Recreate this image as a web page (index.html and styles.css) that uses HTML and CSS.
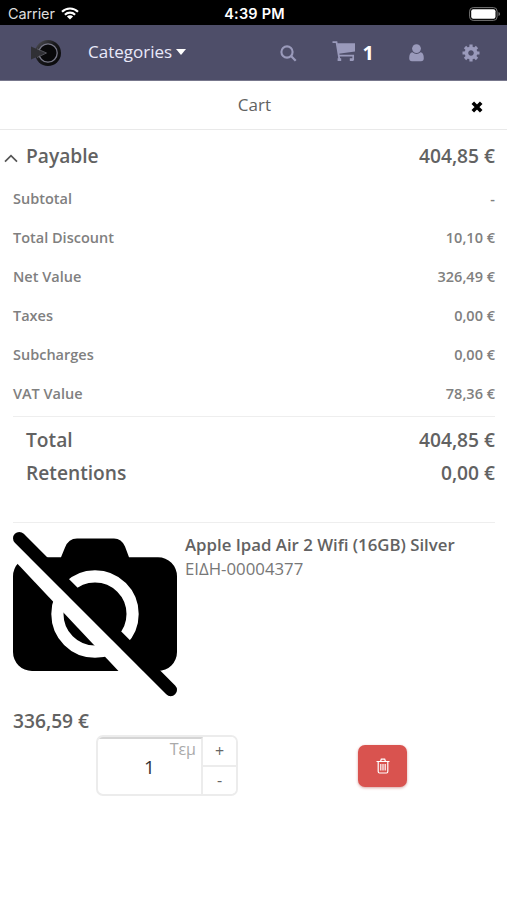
FILE: index.html
```html
<!DOCTYPE html>
<html lang="en">
    <head>
        <meta charset="UTF-8" />
        <meta name="viewport" content="width=device-width, initial-scale=1.0" />
        <title>Cart</title>
        <link rel="stylesheet" href="styles.css">
    </head>
    <body>
        <div class="status">
            <div class="carrier">
                <span>Carrier</span>
                <svg class="wifi" width="18" height="13" viewBox="0 0 18 13">
                    <path d="M1 4.8a11.4 11.4 0 0 1 16 0M3.9 7.7a7.3 7.3 0 0 1 10.2 0" fill="none" stroke="#fff" stroke-width="2.1" />
                    <path d="M9 12.6L5.9 9.6a4.4 4.4 0 0 1 6.2 0z" fill="#fff" />
                </svg>
            </div>
            <div class="time">4:39 PM</div>
            <svg class="battery" width="32" height="14" viewBox="0 0 32 14">
                <rect x=".6" y=".6" width="27.5" height="12.8" rx="3.6" fill="none" stroke="#777" />
                <rect x="2.2" y="2.2" width="24.3" height="9.6" rx="2" fill="#fff" />
                <path d="M29.5 5v4q1.6-.6 1.6-2t-1.6-2" fill="#777" />
            </svg>
        </div>
        <header class="navbar">
            <svg class="logo" width="32" height="28" viewBox="0 0 32 28">
                <defs>
                    <linearGradient id="metal" x1="0" y1="0" x2="1" y2="1">
                        <stop offset="0" stop-color="#55555c" />
                        <stop offset=".45" stop-color="#18181b" />
                        <stop offset="1" stop-color="#050506" />
                    </linearGradient>
                </defs>
                <circle cx="18" cy="14" r="13" fill="url(#metal)" />
                <circle cx="18" cy="14" r="9.2" fill="#08080a" stroke="#777787" stroke-width="1.3" />
                <path d="M1 7.500L16 14L1 20.500z" fill="#303035" />
                <path d="M7 9.800l9.500 4.200-9.500 4.500" fill="none" stroke="#66666f" stroke-width=".8" />
            </svg>
            <a class="categories">Categories<i class="caret"></i></a>
            <nav class="tools">
                <svg class="search" width="17" height="17" viewBox="0 0 17 17">
                    <circle cx="7" cy="7" r="5.6" fill="none" stroke="#9a9abb" stroke-width="2.1" />
                    <path d="M11 11l4.7 4.7" stroke="#9a9abb" stroke-width="2.3" />
                </svg>
                <div class="basket">
                    <svg width="24" height="21" viewBox="0 0 24 21">
                        <path d="M.5 1.2h4l3 18" fill="none" stroke="#9a9abb" stroke-width="1.8" />
                        <path d="M5 2.3h18v8.2L6.6 12.8z" fill="#9a9abb" />
                        <path d="M7 14.7h14.2v4.6" fill="none" stroke="#9a9abb" stroke-width="1.7" />
                        <path d="M5.6 17.3h3.6v2.8H5.6zM17.8 17.3h3.6v2.8h-3.6z" fill="#9a9abb" />
                    </svg>
                    <b>1</b>
                </div>
                <svg class="user" width="15" height="18" viewBox="0 0 15 18">
                    <circle cx="7.5" cy="4.6" r="4.4" fill="#9a9abb" />
                    <path d="M3.4 8.2Q7.5 11.6 11.6 8.2Q14.8 8.8 14.8 14.2Q14.8 17.2 12 17.2H3Q.2 17.2 .2 14.2Q.2 8.8 3.4 8.2z" fill="#9a9abb" />
                </svg>
                <svg class="gear" width="18" height="18" viewBox="-9 -9 18 18">
                    <circle r="4.6" fill="none" stroke="#9a9abb" stroke-width="3.6" />
                    <path d="M0-8.5V-5M0 8.5V5M-8.5 0H-5M8.5 0H5M-6-6l2 2M6 6L4 4M-6 6l2-2M6-6L4-4" stroke="#9a9abb" stroke-width="3.2" />
                </svg>
            </nav>
        </header>
        <div class="title">
            <span>Cart</span>
            <svg class="close" width="12" height="12" viewBox="0 0 12 12">
                <path d="M1.8 1.8l8.4 8.4M10.2 1.8l-8.4 8.4" stroke="#000" stroke-width="3.6" />
            </svg>
        </div>
        <main class="cart">
            <div class="row payable">
                <svg class="arrow" width="14" height="9" viewBox="0 0 14 9">
                    <path d="M1 7.7l6-6 6 6" fill="none" stroke="#555" stroke-width="1.7" />
                </svg>
                <span>Payable</span><span>404,85 €</span>
            </div>
            <ul class="values">
                <li><span>Subtotal</span><span>-</span></li>
                <li><span>Total Discount</span><span>10,10 €</span></li>
                <li><span>Net Value</span><span>326,49 €</span></li>
                <li><span>Taxes</span><span>0,00 €</span></li>
                <li><span>Subcharges</span><span>0,00 €</span></li>
                <li><span>VAT Value</span><span>78,36 €</span></li>
            </ul>
            <div class="totals">
                <div class="row"><span>Total</span><span>404,85 €</span></div>
                <div class="row"><span>Retentions</span><span>0,00 €</span></div>
            </div>
            <div class="product">
                <svg class="photo" width="164" height="165" viewBox="0 0 164 165">
                    <path d="M19 25.3H48L52 15.5Q55.5 6.5 64 6.5H101Q108.5 6.5 112 14.5L116 25.3H145A19 19 0 0 1 164 44.3V120A19 19 0 0 1 145 139H19A19 19 0 0 1 0 120V44.3A19 19 0 0 1 19 25.3z" />
                    <circle cx="82" cy="82" r="37.6" fill="none" stroke="#fff" stroke-width="12.2" />
                    <path d="M-10 -1.5L150 158.5V186.3L-10 16.3z" fill="#fff" />
                    <path d="M6.3 6.3L157.7 157.9" stroke="#000" stroke-width="12.6" stroke-linecap="round" />
                </svg>
                <div class="info">
                    <h3>Apple Ipad Air 2 Wifi (16GB) Silver</h3>
                    <p>ΕΙΔΗ-00004377</p>
                </div>
            </div>
            <div class="price">336,59 €</div>
            <div class="actions">
                <div class="quantity">
                    <div class="amount"><small>Τεμ</small><span>1</span></div>
                    <div class="steps"><button>+</button><button>-</button></div>
                </div>
                <button class="remove">
                    <svg width="14" height="16" viewBox="0 0 14 16">
                        <path d="M.5 3.5h13M4.5 3.5l.8-2.3h3.4l.8 2.3M2.2 3.5v10q0 1.5 1.3 1.5h7q1.3 0 1.3-1.5v-10M4.8 6v6.5M7 6v6.5M9.2 6v6.500" fill="none" stroke="#fff" stroke-width="1.2" />
                    </svg>
                </button>
            </div>
        </main>
    </body>
</html>
```
FILE: styles.css
```css
* {
    margin: 0;
    padding: 0;
    box-sizing: border-box;
}
body {
    background: #fff;
    color: #626262;
    font-family: "Open Sans", sans-serif;
}
svg {
    display: block;
    flex-shrink: 0;
}
.status {
    display: grid;
    grid-template-columns: 1fr auto 1fr;
    align-items: center;
    height: 25px;
    padding: 2px 6px 0 8px;
    background: #000;
    color: #fff;
    font: 14.5px Inter, sans-serif;
}
.carrier {
    display: flex;
    align-items: center;
    gap: 6px;
    color: #ddd;
}
.carrier span {
    letter-spacing: -0.1px;
}
.time {
    font-weight: 600;
    letter-spacing: 0.2px;
}
.battery {
    justify-self: end;
}
.navbar {
    display: flex;
    align-items: center;
    height: 56px;
    padding: 0 27px 0 30px;
    background: #4e4e69;
    border-bottom: 1px solid #77778c;
}
.categories {
    display: flex;
    align-items: center;
    margin: -2px 0 0 26px;
    color: #e9e9fa;
    font-size: 17px;
}
.caret {
    margin-left: 4px;
    border: 5px solid transparent;
    border-top: 6px solid #fff;
    border-bottom: 0;
}
.tools {
    display: flex;
    align-items: center;
    margin-left: auto;
}
.search {
    margin-top: 2px;
}
.basket {
    display: flex;
    align-items: center;
    gap: 7px;
    margin: 0 35px 0 35px;
}
.basket svg {
    margin-top: -2px;
}
.basket b {
    color: #fff;
    font-size: 20px;
}
.gear {
    margin-left: 38px;
}
.title {
    display: flex;
    align-items: center;
    justify-content: flex-end;
    height: 49px;
    padding-right: 24px;
    border-bottom: 1px solid #e9e9e9;
    font-size: 17px;
}
.title span {
    margin: -2px 200px 0 0;
}
.close {
    margin-top: 3px;
}
.cart {
    padding: 9px 12px 0 13px;
}
.row {
    display: flex;
    align-items: center;
    justify-content: space-between;
    height: 33px;
    padding-left: 13px;
    font-size: 19.2px;
    font-weight: 600;
}
.payable {
    margin-left: -9px;
    padding-left: 0;
}
.payable span:last-child {
    margin-left: auto;
}
.arrow {
    margin: 5px 8px 0 0;
}
.values {
    padding: 7px 0 3px;
    list-style: none;
}
.values li {
    display: flex;
    align-items: center;
    justify-content: space-between;
    height: 39px;
    color: #808080;
    font-size: 14.5px;
    font-weight: 600;
}
.totals {
    height: 106px;
    padding-top: 6px;
    border-top: 1px solid #eee;
}
.product {
    display: flex;
    gap: 8px;
    height: 178px;
    padding-top: 9px;
    border-top: 1px solid #eee;
}
.info h3 {
    font-size: 16.8px;
    font-weight: 600;
    line-height: 26px;
}
.info p {
    color: #777;
    font-size: 16.8px;
    line-height: 22px;
}
.price {
    height: 35px;
    line-height: 42px;
    font-size: 19.2px;
    font-weight: 600;
}
.actions {
    display: flex;
    align-items: center;
    padding-left: 83px;
}
.quantity {
    display: flex;
    width: 142px;
    height: 61px;
    border: 2px solid #ececec;
    border-radius: 7px;
    overflow: hidden;
}
.amount {
    position: relative;
    display: flex;
    align-items: center;
    justify-content: center;
    width: 105px;
    border-top: 2px solid #d5d5d5;
    border-right: 2px solid #ececec;
    color: #333;
    font-size: 19px;
}
.amount small {
    position: absolute;
    top: 0;
    right: 5px;
    color: #aaa;
    font-size: 16px;
    line-height: 20px;
}
.steps {
    display: flex;
    flex: 1;
    flex-direction: column;
}
.steps button {
    flex: 1;
    border: 0;
    background: #fff;
    color: #666;
    font: 16px "Open Sans", sans-serif;
}
.steps button + button {
    border-top: 2px solid #ececec;
}
.remove {
    display: flex;
    align-items: center;
    justify-content: center;
    width: 49px;
    height: 42px;
    margin-left: 120px;
    border: 0;
    border-radius: 7px;
    background: #d9534f;
    box-shadow: 0 1px 3px #d9a5a3;
}
```
